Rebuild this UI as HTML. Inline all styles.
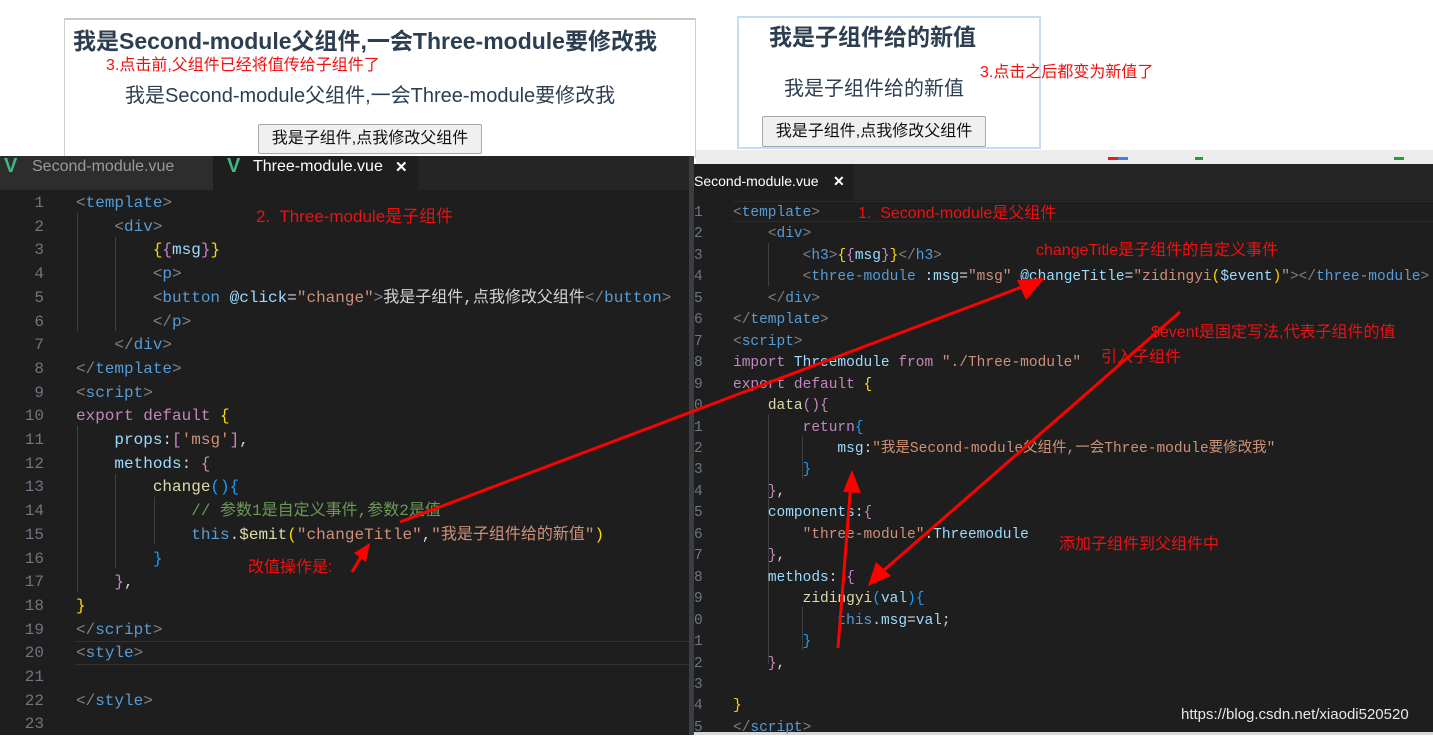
<!DOCTYPE html>
<html><head><meta charset="utf-8">
<style>
*{margin:0;padding:0;box-sizing:border-box}
body{width:1433px;height:735px;position:relative;overflow:hidden;background:#fff;font-family:"Liberation Sans","Noto Sans CJK SC",sans-serif}
.abs{position:absolute;white-space:pre}
.code{font-family:"Liberation Mono","Noto Sans CJK SC",monospace;color:#d4d4d4}
.t{color:#569cd6}.g{color:#808080}.p{color:#c586c0}.y{color:#ffd700}.s{color:#ce9178}.v{color:#9cdcfe}.f{color:#dcdcaa}.c{color:#6a9955}.w{color:#d4d4d4}.b{color:#179fff}
.red{color:#f01010;font-family:"Liberation Sans","Noto Sans CJK SC",sans-serif}
.ln{color:#6e7681;font-family:"Liberation Mono",monospace;display:inline-block}
.L .ln{width:76px;padding-right:32px;text-align:right}
.R .ln{width:39px;text-align:left}
.btn{position:absolute;background:#f0f0f0;border:1px solid #a8a8a8;border-radius:2px;font-size:16px;color:#111;text-align:center}
</style></head><body>

<div class="abs" style="left:64px;top:18px;width:632px;height:140px;border:1px solid #d0d0d0;border-top:2px solid #c8c8c8;background:#fff"></div>
<div class="abs" style="left:73px;top:22px;font-size:23px;font-weight:bold;color:#2c3e50">我是Second-module父组件,一会Three-module要修改我</div>
<div class="abs red" style="left:106px;top:51px;font-size:16px">3.点击前,父组件已经将值传给子组件了</div>
<div class="abs" style="left:125px;top:79px;font-size:20px;color:#2c3e50">我是Second-module父组件,一会Three-module要修改我</div>
<div class="btn" style="left:258px;top:124px;width:224px;height:30px;line-height:28px">我是子组件,点我修改父组件</div>

<div class="abs" style="left:737px;top:16px;width:304px;height:133px;border:2px solid #c5dcf7;background:#fff"></div>
<div class="abs" style="left:769px;top:18px;font-size:23px;font-weight:bold;color:#2c3e50">我是子组件给的新值</div>
<div class="abs red" style="left:980px;top:58px;font-size:16px">3.点击之后都变为新值了</div>
<div class="abs" style="left:784px;top:72px;font-size:20px;color:#2c3e50">我是子组件给的新值</div>
<div class="btn" style="left:762px;top:116px;width:224px;height:31px;line-height:29px">我是子组件,点我修改父组件</div>

<div class="abs" style="left:696px;top:150px;width:737px;height:14px;background:#ececec"></div>
<div class="abs" style="left:1108px;top:157px;width:20px;height:3px;background:#e02020"></div>
<div class="abs" style="left:1118px;top:157px;width:10px;height:3px;background:#4080e0"></div>
<div class="abs" style="left:1195px;top:157px;width:8px;height:3px;background:#2a9a3a"></div>
<div class="abs" style="left:1394px;top:157px;width:10px;height:3px;background:#2a9a3a"></div>

<div class="abs" style="left:0;top:156px;width:694px;height:579px;background:#1e1e1e"></div>
<div class="abs" style="left:0;top:156px;width:694px;height:34px;background:#252526"></div>
<div class="abs" style="left:0;top:156px;width:213px;height:34px;background:#2d2d2d"></div>
<div class="abs" style="left:213px;top:156px;width:205px;height:34px;background:#1e1e1e"></div>
<div class="abs" style="left:4px;top:155px;font-size:20px;color:#41b883;font-weight:bold">V</div>
<div class="abs" style="left:32px;top:158px;font-size:16px;color:#9a9a9a">Second-module.vue</div>
<div class="abs" style="left:227px;top:155px;font-size:20px;color:#41b883;font-weight:bold">V</div>
<div class="abs" style="left:253px;top:158px;font-size:16px;color:#fff">Three-module.vue</div>
<div class="abs" style="left:395px;top:158px;font-size:15px;color:#fff;font-weight:bold">✕</div>
<div class="abs" style="left:689px;top:156px;width:5px;height:579px;background:#3a3d41"></div>
<div class="abs" style="left:75px;top:641px;width:614px;height:24px;border-top:1px solid #333;border-bottom:1px solid #333"></div>
<div class="abs" style="left:77px;top:213px;width:1px;height:118px;background:#404040"></div>
<div class="abs" style="left:115px;top:237px;width:1px;height:94px;background:#404040"></div>
<div class="abs" style="left:77px;top:426px;width:1px;height:166px;background:#404040"></div>
<div class="abs" style="left:115px;top:474px;width:1px;height:94px;background:#404040"></div>
<div class="abs" style="left:154px;top:497px;width:1px;height:47px;background:#404040"></div>

<div class="abs code L" style="left:0;top:192px;font-size:16px;line-height:23.7px"><span class="ln">1</span><span class="g">&lt;</span><span class="t">template</span><span class="g">&gt;</span>
<span class="ln">2</span>    <span class="g">&lt;</span><span class="t">div</span><span class="g">&gt;</span>
<span class="ln">3</span>        <span class="y">{</span><span class="p">{</span><span class="v">msg</span><span class="p">}</span><span class="y">}</span>
<span class="ln">4</span>        <span class="g">&lt;</span><span class="t">p</span><span class="g">&gt;</span>
<span class="ln">5</span>        <span class="g">&lt;</span><span class="t">button</span> <span class="v">@click</span>=<span class="s">"change"</span><span class="g">&gt;</span>我是子组件,点我修改父组件<span class="g">&lt;/</span><span class="t">button</span><span class="g">&gt;</span>
<span class="ln">6</span>        <span class="g">&lt;/</span><span class="t">p</span><span class="g">&gt;</span>
<span class="ln">7</span>    <span class="g">&lt;/</span><span class="t">div</span><span class="g">&gt;</span>
<span class="ln">8</span><span class="g">&lt;/</span><span class="t">template</span><span class="g">&gt;</span>
<span class="ln">9</span><span class="g">&lt;</span><span class="t">script</span><span class="g">&gt;</span>
<span class="ln">10</span><span class="p">export default</span> <span class="y">{</span>
<span class="ln">11</span>    <span class="v">props</span>:<span class="p">[</span><span class="s">'msg'</span><span class="p">]</span>,
<span class="ln">12</span>    <span class="v">methods</span>: <span class="p">{</span>
<span class="ln">13</span>        <span class="f">change</span><span class="b">(){</span>
<span class="ln">14</span>            <span class="c">// 参数1是自定义事件,参数2是值</span>
<span class="ln">15</span>            <span class="t">this</span>.<span class="f">$emit</span><span class="y">(</span><span class="s">"changeTitle"</span>,<span class="s">"我是子组件给的新值"</span><span class="y">)</span>
<span class="ln">16</span>        <span class="b">}</span>
<span class="ln">17</span>    <span class="p">}</span>,
<span class="ln">18</span><span class="y">}</span>
<span class="ln">19</span><span class="g">&lt;/</span><span class="t">script</span><span class="g">&gt;</span>
<span class="ln">20</span><span class="g">&lt;</span><span class="t">style</span><span class="g">&gt;</span>
<span class="ln">21</span>
<span class="ln">22</span><span class="g">&lt;/</span><span class="t">style</span><span class="g">&gt;</span>
<span class="ln">23</span></div>
<div class="abs red" style="left:256px;top:202px;font-size:17px">2.  Three-module是子组件</div>
<div class="abs red" style="left:248px;top:553px;font-size:16px">改值操作是:</div>

<div class="abs" style="left:694px;top:164px;width:739px;height:571px;background:#1e1e1e"></div>
<div class="abs" style="left:694px;top:164px;width:739px;height:36px;background:#252526"></div>
<div class="abs" style="left:694px;top:164px;width:160px;height:36px;background:#1e1e1e"></div>
<div class="abs" style="left:694px;top:173px;font-size:14px;color:#fff">Second-module.vue</div>
<div class="abs" style="left:833px;top:173px;font-size:14px;color:#fff;font-weight:bold">✕</div>
<div class="abs" style="left:733px;top:201px;width:700px;height:21px;border-top:1px solid #2a2a2a;border-bottom:1px solid #2a2a2a"></div>
<div class="abs" style="left:694px;top:732px;width:739px;height:3px;background:#d8d8d8"></div>
<div class="abs" style="left:768px;top:243px;width:1px;height:43px;background:#404040"></div>
<div class="abs" style="left:768px;top:414px;width:1px;height:250px;background:#404040"></div>
<div class="abs" style="left:802px;top:436px;width:1px;height:43px;background:#404040"></div>
<div class="abs" style="left:802px;top:607px;width:1px;height:43px;background:#404040"></div>

<div class="abs code R" style="left:694px;top:203px;font-size:14.5px;line-height:21.45px"><span class="ln">1</span><span class="g">&lt;</span><span class="t">template</span><span class="g">&gt;</span>
<span class="ln">2</span>    <span class="g">&lt;</span><span class="t">div</span><span class="g">&gt;</span>
<span class="ln">3</span>        <span class="g">&lt;</span><span class="t">h3</span><span class="g">&gt;</span><span class="y">{</span><span class="p">{</span><span class="v">msg</span><span class="p">}</span><span class="y">}</span><span class="g">&lt;/</span><span class="t">h3</span><span class="g">&gt;</span>
<span class="ln">4</span>        <span class="g">&lt;</span><span class="t">three-module</span> <span class="v">:msg</span>=<span class="s">"msg"</span> <span class="v">@changeTitle</span>=<span class="s">"zidingyi</span><span class="y">(</span><span class="v">$event</span><span class="y">)</span><span class="s">"</span><span class="g">&gt;&lt;/</span><span class="t">three-module</span><span class="g">&gt;</span>
<span class="ln">5</span>    <span class="g">&lt;/</span><span class="t">div</span><span class="g">&gt;</span>
<span class="ln">6</span><span class="g">&lt;/</span><span class="t">template</span><span class="g">&gt;</span>
<span class="ln">7</span><span class="g">&lt;</span><span class="t">script</span><span class="g">&gt;</span>
<span class="ln">8</span><span class="p">import</span> <span class="v">Threemodule</span> <span class="p">from</span> <span class="s">"./Three-module"</span>
<span class="ln">9</span><span class="p">export default</span> <span class="y">{</span>
<span class="ln">0</span>    <span class="f">data</span><span class="p">(){</span>
<span class="ln">1</span>        <span class="p">return</span><span class="b">{</span>
<span class="ln">2</span>            <span class="v">msg</span>:<span class="s">"我是Second-module父组件,一会Three-module要修改我"</span>
<span class="ln">3</span>        <span class="b">}</span>
<span class="ln">4</span>    <span class="p">}</span>,
<span class="ln">5</span>    <span class="v">components</span>:<span class="p">{</span>
<span class="ln">6</span>        <span class="s">"three-module"</span>:<span class="v">Threemodule</span>
<span class="ln">7</span>    <span class="p">}</span>,
<span class="ln">8</span>    <span class="v">methods</span>: <span class="p">{</span>
<span class="ln">9</span>        <span class="f">zidingyi</span><span class="b">(</span><span class="v">val</span><span class="b">){</span>
<span class="ln">0</span>            <span class="t">this</span>.<span class="v">msg</span>=<span class="v">val</span>;
<span class="ln">1</span>        <span class="b">}</span>
<span class="ln">2</span>    <span class="p">}</span>,
<span class="ln">3</span>
<span class="ln">4</span><span class="y">}</span>
<span class="ln">5</span><span class="g">&lt;/</span><span class="t">script</span><span class="g">&gt;</span></div>
<div class="abs red" style="left:858px;top:199px;font-size:16px">1.  Second-module是父组件</div>
<div class="abs red" style="left:1036px;top:236px;font-size:16px">changeTitle是子组件的自定义事件</div>
<div class="abs red" style="left:1151px;top:318px;font-size:16px">$event是固定写法,代表子组件的值</div>
<div class="abs red" style="left:1101px;top:343px;font-size:16px">引入子组件</div>
<div class="abs red" style="left:1059px;top:530px;font-size:16px">添加子组件到父组件中</div>
<div class="abs" style="left:1181px;top:706px;font-size:15px;color:#e8e8e8">https://blog.csdn.net/xiaodi520520</div>

<svg class="abs" style="left:0;top:0" width="1433" height="735">
<g stroke="#f00" stroke-width="3" fill="none">
<line x1="400" y1="522" x2="1035" y2="282"/>
<line x1="352" y1="572" x2="364" y2="552"/>
<line x1="1180" y1="312" x2="875" y2="578"/>
<line x1="838" y1="648" x2="851" y2="482"/>
</g>
<g fill="#f00">
<polygon points="1045,278 1017,280 1026,300"/>
<polygon points="370,543 354,553 366,562"/>
<polygon points="868,586 876,562 891,576"/>
<polygon points="852,470 843,492 861,493"/>
</g>
</svg>
</body></html>
